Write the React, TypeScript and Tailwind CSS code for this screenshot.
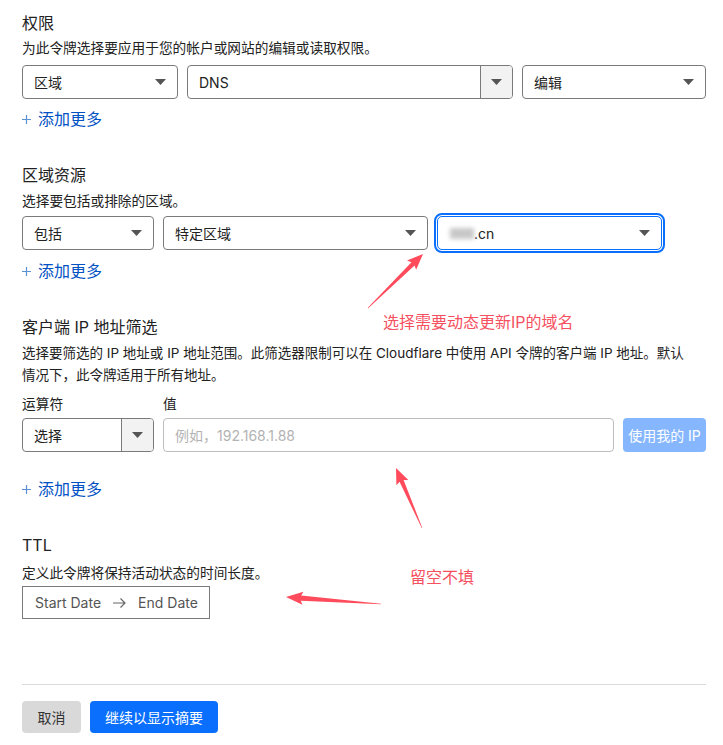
import React from "react";

const cjk = { fontFamily: '"Inter", "Noto Sans CJK SC", sans-serif' };

// Small triangle used by every select
const Caret = () => (
  <svg width="11" height="6" viewBox="0 0 11 6" className="shrink-0">
    <path d="M0 0 L11 0 L5.5 6 Z" fill="#555" />
  </svg>
);

type SelectProps = {
  label: string;
  width: string;
  split?: boolean;
};

function Select({ label, width, split }: SelectProps) {
  if (split) {
    return (
      <div className={`${width} h-[34px] flex border border-[#7a7a7a] rounded-[4px] overflow-hidden`}>
        <div className="flex-1 flex items-center pl-[11px] text-[14px] text-[#222]">{label}</div>
        <div className="w-[32px] flex items-center justify-center bg-[#f2f2f2] border-l border-[#7a7a7a]">
          <Caret />
        </div>
      </div>
    );
  }
  return (
    <div className={`${width} h-[34px] flex items-center justify-between border border-[#7a7a7a] rounded-[4px] pl-[11px] pr-[11px] text-[14px] text-[#222]`}>
      <span>{label}</span>
      <Caret />
    </div>
  );
}

const AddMore = ({ className }: { className: string }) => (
  <div className={`${className} h-[20px] flex items-center text-[16px] leading-[20px] text-[#0051c3]`}>
    <svg width="9" height="9" viewBox="0 0 9 9" className="mr-[7px]">
      <path d="M4.5 0 V9 M0 4.5 H9" stroke="#5b8fd6" strokeWidth="1.2" />
    </svg>
    <span>添加更多</span>
  </div>
);

// Tapered annotation arrow, thin at the tail and with a solid head at the tip
function arrowPoints(tx: number, ty: number, px: number, py: number, head = 14, half = 6.5, neck = 2.2) {
  const dx = px - tx;
  const dy = py - ty;
  const len = Math.hypot(dx, dy);
  const ux = dx / len;
  const uy = dy / len;
  const nx = -uy;
  const ny = ux;
  const bx = px - ux * head;
  const by = py - uy * head;
  const pts = [
    [tx + nx * 0.3, ty + ny * 0.3],
    [bx + nx * neck, by + ny * neck],
    [bx + nx * half - ux * 2, by + ny * half - uy * 2],
    [px, py],
    [bx - nx * half - ux * 2, by - ny * half - uy * 2],
    [bx - nx * neck, by - ny * neck],
    [tx - nx * 0.3, ty - ny * 0.3],
  ];
  return pts.map((p) => p.join(",")).join(" ");
}

export default function App() {
  return (
    <div className="relative w-[723px] h-[745px] bg-white overflow-hidden" style={cjk}>
      <div className="ml-[22px] w-[684px] pt-[12px]">
        {/* 权限 */}
        <h2 className="text-[16px] leading-[22px] text-[#222]">权限</h2>
        <p className="mt-[4px] text-[13.7px] leading-[20px] text-[#222]">为此令牌选择要应用于您的帐户或网站的编辑或读取权限。</p>
        <div className="mt-[7px] flex gap-[9px]">
          <Select label="区域" width="w-[156px]" />
          <Select label="DNS" width="w-[326px]" split />
          <Select label="编辑" width="w-[184px]" />
        </div>
        <AddMore className="mt-[10px]" />

        {/* 区域资源 */}
        <h2 className="mt-[35px] text-[16px] leading-[22px] text-[#222]">区域资源</h2>
        <p className="mt-[5px] text-[13.7px] leading-[20px] text-[#222]">选择要包括或排除的区域。</p>
        <div className="mt-[5px] flex items-center">
          <Select label="包括" width="w-[132px]" />
          <div className="w-[9px]" />
          <Select label="特定区域" width="w-[265px]" />
          <div className="w-[9px]" />
          <div className="w-[225px] h-[34px] flex items-center justify-between border border-[#0a6ffd] rounded-[5px] outline-2 outline-solid outline-[#0a6ffd] outline-offset-1 pl-[12px] pr-[11px] text-[14px] text-[#222]">
            <span className="flex items-center">
              <span className="inline-block w-[24px] h-[11px] bg-[#c8c8c8] blur-[2px]" />
              <span>.cn</span>
            </span>
            <Caret />
          </div>
        </div>
        <AddMore className="mt-[11px]" />

        {/* 客户端 IP 地址筛选 */}
        <h2 className="mt-[35px] text-[16px] leading-[22px] text-[#222]">客户端 IP 地址筛选</h2>
        <p className="mt-[4px] text-[13.5px] leading-[22px] text-[#222]">
          选择要筛选的 IP 地址或 IP 地址范围。此筛选器限制可以在 Cloudflare 中使用 API 令牌的客户端 IP 地址。默认
          <br />
          情况下，此令牌适用于所有地址。
        </p>
        <div className="mt-[8px] flex text-[13.7px] leading-[20px] text-[#222]">
          <span className="w-[141px]">运算符</span>
          <span>值</span>
        </div>
        <div className="mt-[4px] flex gap-[9px]">
          <Select label="选择" width="w-[132px]" split />
          <div className="w-[451px] h-[34px] flex items-center border border-[#bdbdbd] rounded-[4px] pl-[11px] text-[14px] text-[#b3b3b3]">
            例如，192.168.1.88
          </div>
          <button className="w-[83px] h-[34px] rounded-[4px] bg-[#86b7fe] text-white text-[14px]">使用我的 IP</button>
        </div>
        <AddMore className="mt-[27px]" />

        {/* TTL */}
        <h2 className="mt-[35px] text-[16px] leading-[22px] text-[#222]">TTL</h2>
        <p className="mt-[7px] text-[13.7px] leading-[20px] text-[#222]">定义此令牌将保持活动状态的时间长度。</p>
        <div className="mt-[3px] w-[188px] h-[33px] flex items-center border border-[#7a7a7a] pl-[12px] text-[14px] text-[#555]">
          <span>Start Date</span>
          <svg width="13" height="10" viewBox="0 0 13 10" className="mx-[12px]">
            <path d="M0 5 H12 M7.5 0.5 L12 5 L7.5 9.5" stroke="#666" strokeWidth="1.2" fill="none" />
          </svg>
          <span>End Date</span>
        </div>

        <div className="mt-[65px] border-t border-[#d9d9d9]" />
        <div className="mt-[16px] flex gap-[9px]">
          <button className="w-[59px] h-[32px] rounded-[4px] bg-[#d9d9d9] text-[#333] text-[14px]">取消</button>
          <button className="w-[128px] h-[32px] rounded-[4px] bg-[#0a6ffd] text-white text-[14px]">继续以显示摘要</button>
        </div>
      </div>

      {/* annotations */}
      <svg className="absolute inset-0 pointer-events-none" width="723" height="745">
        <polygon points={arrowPoints(368, 308, 423, 254)} fill="#ff4b5c" />
        <polygon points={arrowPoints(422, 528, 396, 468)} fill="#ff4b5c" />
        <polygon points={arrowPoints(381, 604, 286, 597, 15, 6.5, 2.6)} fill="#ff4b5c" />
      </svg>
      <span className="absolute left-[383px] top-[311px] text-[16px] leading-[22px] text-[#f5505f]">选择需要动态更新IP的域名</span>
      <span className="absolute left-[410px] top-[566px] text-[16px] leading-[22px] text-[#f5505f]">留空不填</span>
    </div>
  );
}
